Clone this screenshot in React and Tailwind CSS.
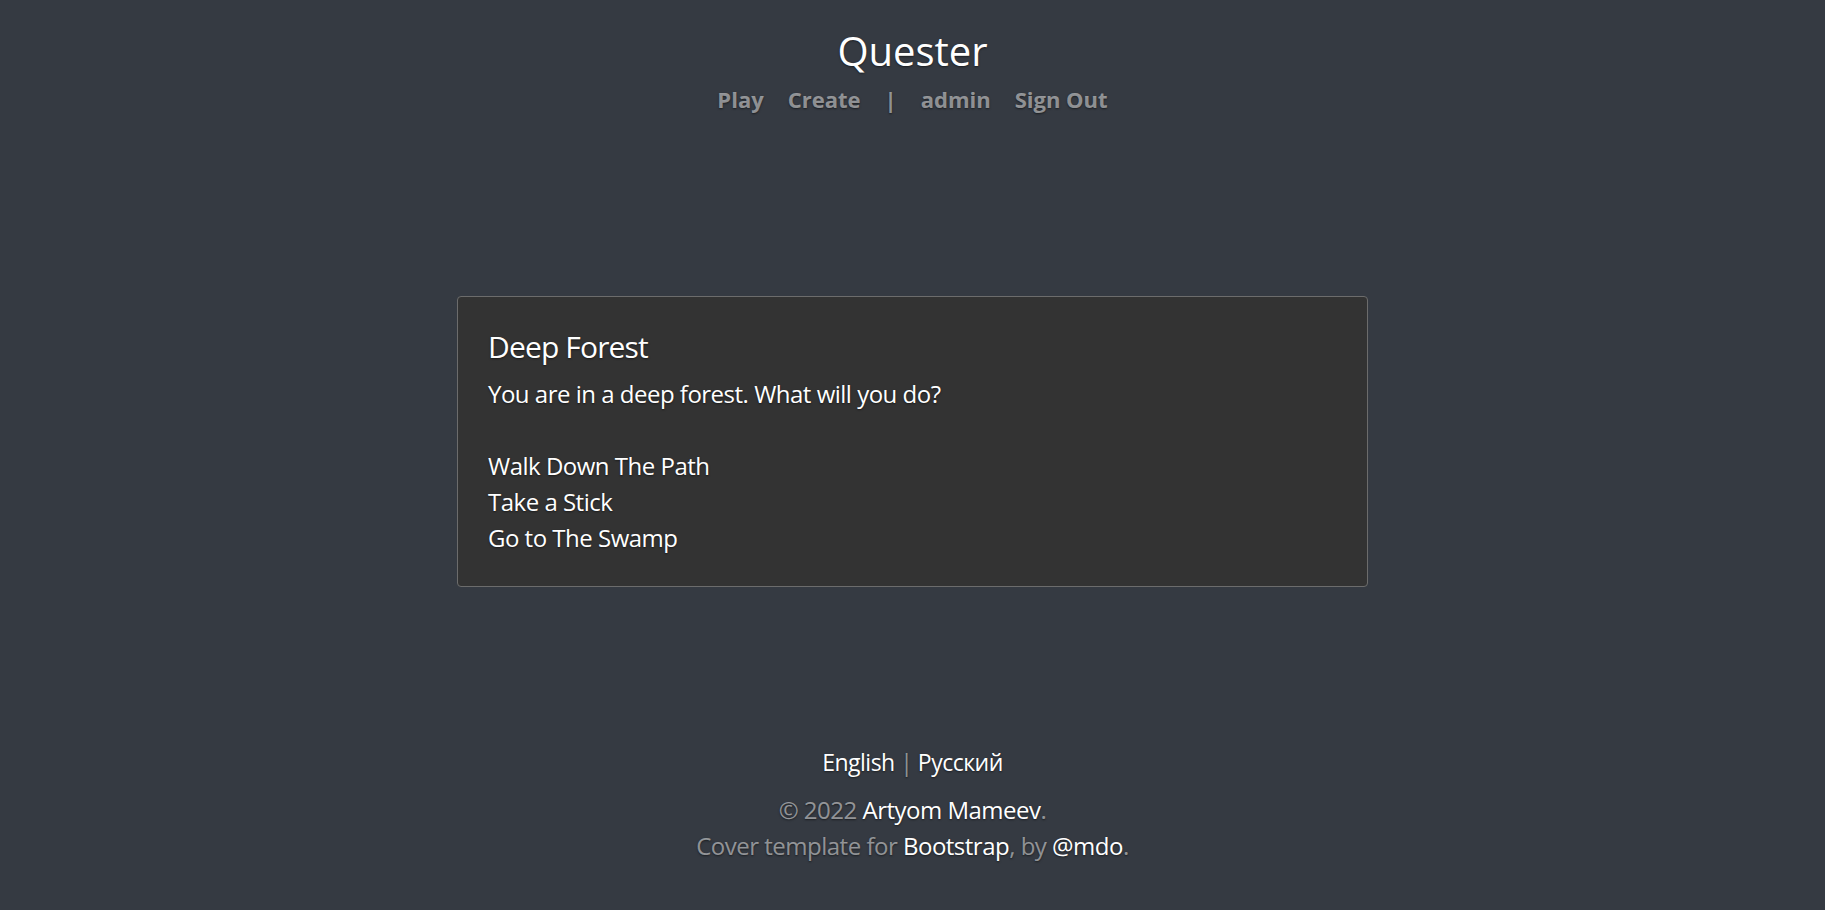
import React from "react";

const shadow = "[text-shadow:0_1px_2px_rgba(0,0,0,0.5)]";

function Header() {
  return (
    <header className="pt-[26px] text-center">
      <h3 className={`text-[40px] leading-[50px] font-normal text-white ${shadow}`}>Quester</h3>
      <nav className={`mt-[7px] flex items-center justify-center gap-[24px] text-[22px] leading-[33px] font-bold text-white/50 ${shadow}`}>
        <a href="#">Play</a>
        <a href="#">Create</a>
        <span>|</span>
        <a href="#">admin</a>
        <a href="#">Sign Out</a>
      </nav>
    </header>
  );
}

function Scene() {
  return (
    <div className={`w-[911px] rounded-[4px] border border-[#6c6c6c] bg-[#333333] px-[30px] pt-[32px] pb-[30px] text-white tracking-[-0.5px] ${shadow}`}>
      <h5 className="text-[30px] leading-[36px] font-normal tracking-[-0.85px] mb-[11px]">Deep Forest</h5>
      <p className="text-[24px] leading-[36px]">
        You are in a deep forest. What will you do?
        <br />
        <br />
        <a href="#">Walk Down The Path</a>
        <br />
        <a href="#">Take a Stick</a>
        <br />
        <a href="#">Go to The Swamp</a>
      </p>
    </div>
  );
}

function Footer() {
  return (
    <footer className={`mt-auto pb-[46px] text-center text-[24px] leading-[36px] tracking-[-0.5px] text-white/50 ${shadow}`}>
      <p className="mb-[12px] text-[23px]">
        <a href="#" className="text-white">English</a> | <a href="#" className="text-white">Русский</a>
      </p>
      <p>
        © 2022 <a href="#" className="text-white">Artyom Mameev</a>.
      </p>
      <p>
        Cover template for <a href="#" className="text-white">Bootstrap</a>, by{" "}
        <a href="#" className="text-white">@mdo</a>.
      </p>
    </footer>
  );
}

export default function App() {
  return (
    <div
      className="flex h-[910px] flex-col items-center bg-[#353a42]"
      style={{ fontFamily: '"Open Sans", "Noto Sans", sans-serif' }}
    >
      <Header />
      <main className="mt-[180px]">
        <Scene />
      </main>
      <Footer />
    </div>
  );
}
